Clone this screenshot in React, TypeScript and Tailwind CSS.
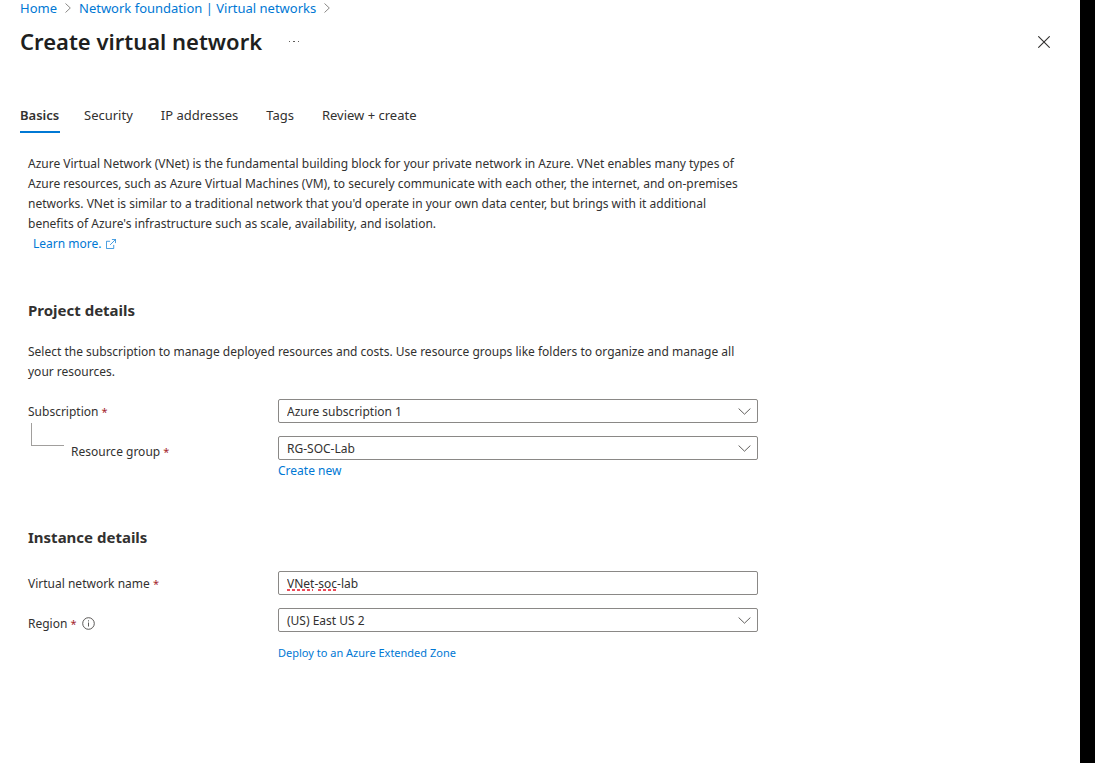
import { useState, type ReactNode } from "react";

const tabs = ["Security", "IP addresses", "Tags", "Review + create"];

function Crumb() {
  return (
    <svg className="h-[10px] w-[6px] shrink-0" viewBox="0 0 6 10" fill="none" stroke="#8a8886" aria-hidden="true">
      <path d="M0.5 0.5 5.3 5 0.5 9.5" />
    </svg>
  );
}

function Label({ id, children }: { id: string; children: ReactNode }) {
  return (
    <label htmlFor={id} className="leading-5">
      {children} <span className="text-[11px] text-[#a4262c]">*</span>
    </label>
  );
}

function Dropdown({ id, value }: { id: string; value: string }) {
  return (
    <div className="relative">
      <select
        id={id}
        defaultValue={value}
        className="block h-6 w-full appearance-none rounded-[2px] border border-[#8a8886] bg-white pt-0.5 pr-8 pl-2 text-[#323130] outline-none"
      >
        <option>{value}</option>
      </select>
      <svg
        className="pointer-events-none absolute top-[9px] right-[7px] h-[7px] w-[13px]"
        viewBox="0 0 13 7"
        fill="none"
        stroke="#605e5c"
        aria-hidden="true"
      >
        <path d="M0.6 0.5 6.5 6.2 12.4 0.5" />
      </svg>
    </div>
  );
}

export default function App() {
  const [name, setName] = useState("VNet-soc-lab");
  return (
    <div className="flex min-h-screen bg-white font-['Noto_Sans','Open_Sans',sans-serif] text-xs text-[#323130]">
      <main className="min-w-0 flex-1 px-5">
        <nav aria-label="Breadcrumb" className="flex h-4 items-center gap-2 text-[13px] leading-4 text-[#0078d4]">
          <a href="#home">Home</a>
          <Crumb />
          <a href="#networks">Network foundation | Virtual networks</a>
          <Crumb />
        </nav>

        <header className="mt-[9px] flex h-8 items-center pr-1">
          <h1 className="text-[22px] leading-8 font-semibold text-[#201f1e]">Create virtual network</h1>
          <button type="button" aria-label="More actions" className="ml-[22px] flex h-6 w-5 items-center justify-center pt-0.5">
            <svg className="h-[2px] w-[12px]" viewBox="0 0 12 2" fill="#605e5c" aria-hidden="true">
              <path d="M1 0h1v1H1zM5 0h2v1H5zM10 0h1v1h-1z" />
            </svg>
          </button>
          <button type="button" aria-label="Close" className="ml-auto flex h-6 w-6 items-center justify-center pt-0.5">
            <svg className="h-3 w-3" viewBox="0 0 12 12" fill="none" stroke="#323130" strokeWidth="1.1" aria-hidden="true">
              <path d="m.3.3 11.4 11.4M11.7.3.3 11.7" />
            </svg>
          </button>
        </header>

        <div role="tablist" className="mt-[41px] flex h-[35px] gap-7 text-[13px] leading-8">
          <button type="button" role="tab" aria-selected="true" className="-mr-1 w-10 border-b-2 border-[#0078d4] text-left font-semibold">
            Basics
          </button>
          {tabs.map((tab) => (
            <button key={tab} type="button" role="tab" aria-selected="false" className="border-b-2 border-transparent">
              {tab}
            </button>
          ))}
        </div>

        <div className="max-w-[746px] px-2 pt-[21px] leading-5">
          <p className="max-w-[720px]">
            Azure Virtual Network (VNet) is the fundamental building block for your private network in Azure. VNet enables many types of
            Azure resources, such as Azure Virtual Machines (VM), to securely communicate with each other, the internet, and on-premises
            networks. VNet is similar to a traditional network that you'd operate in your own data center, but brings with it additional
            benefits of Azure's infrastructure such as scale, availability, and isolation.
          </p>
          <a href="#learn" className="ml-[5px] flex w-fit items-center gap-[5px] text-[#0078d4]">
            Learn more.
            <svg className="mb-px h-[10px] w-[10px]" viewBox="0 0 11 11" fill="none" stroke="#0078d4" strokeWidth=".8" aria-hidden="true">
              <path d="M4.5 2.5h-4v8h8v-4M6.5.5h4v4M10.5.5l-6 6" />
            </svg>
          </a>

          <h2 className="mt-[46px] text-[15px] leading-5 font-bold">Project details</h2>
          <p className="mt-[22px] max-w-[720px]">
            Select the subscription to manage deployed resources and costs. Use resource groups like folders to organize and manage all
            your resources.
          </p>

          <div className="mt-[17px] grid grid-cols-[250px_minmax(0,1fr)] gap-y-[13px]">
            <div className="flex h-6 items-center pt-0.5">
              <Label id="subscription">Subscription</Label>
            </div>
            <Dropdown id="subscription" value="Azure subscription 1" />
            <div className="flex">
              <span className="-mt-[13px] mr-[7px] ml-[3px] h-[23px] w-[33px] border-b border-l border-[#a19f9d]" />
              <span className="pt-[6px]">
                <Label id="group">Resource group</Label>
              </span>
            </div>
            <div>
              <Dropdown id="group" value="RG-SOC-Lab" />
              <button type="button" className="mt-px block leading-5 text-[#0078d4]">
                Create new
              </button>
            </div>
          </div>

          <h2 className="mt-[46px] text-[15px] leading-5 font-bold">Instance details</h2>
          <div className="mt-6 grid grid-cols-[250px_minmax(0,1fr)] gap-y-[13px]">
            <div className="flex h-6 items-center pt-0.5">
              <Label id="name">Virtual network name</Label>
            </div>
            <div className="relative">
              <input
                id="name"
                value={name}
                spellCheck={false}
                onChange={(event) => setName(event.target.value)}
                className="block h-6 w-full rounded-[2px] border border-[#8a8886] bg-white px-2 text-[#323130] outline-none"
              />
              {name === "VNet-soc-lab" && (
                <svg className="pointer-events-none absolute top-[18px] left-[9px] h-[2px] w-[54px]" viewBox="0 0 54 2" stroke="#e81123" strokeWidth="1.4" aria-hidden="true">
                  <path d="M0 1h26M31 1h20" strokeDasharray="3 2" />
                </svg>
              )}
            </div>
            <div className="flex items-start gap-[5px] pt-[6px]">
              <Label id="region">Region</Label>
              <svg className="mt-[3px] h-[13px] w-[13px]" viewBox="0 0 13 13" fill="none" stroke="#484644" strokeWidth=".9" aria-hidden="true">
                <circle cx="6.5" cy="6.5" r="5.8" />
                <path d="M6.5 5.5v4M6.5 3.3v1.1" />
              </svg>
            </div>
            <div>
              <Dropdown id="region" value="(US) East US 2" />
              <a href="#extended" className="mt-[11px] block w-fit text-[11px] leading-5 text-[#0078d4]">
                Deploy to an Azure Extended Zone
              </a>
            </div>
          </div>
        </div>
      </main>
      <aside aria-hidden="true" className="w-[15px] shrink-0 bg-black" />
    </div>
  );
}
